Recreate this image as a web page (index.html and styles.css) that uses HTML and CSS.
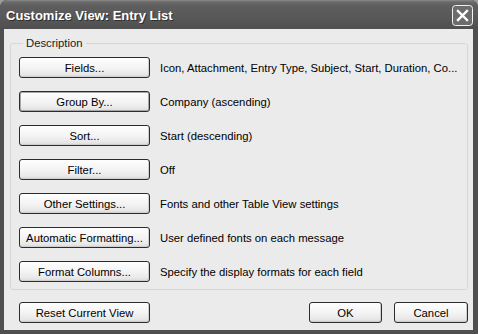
FILE: index.html
```html
<!DOCTYPE html>
<html>
<head>
<meta charset="utf-8">
<link rel="stylesheet" href="styles.css">
</head>
<body>
<div class="window">
  <div class="titlebar">
    <span class="title">Customize View: Entry List</span>
    <span class="close">
      <svg width="21" height="21" viewBox="0 0 21 21">
        <rect x="0.5" y="0.5" width="20" height="20" rx="3" ry="3" fill="#6c6c6c" stroke="#f2f2f2" stroke-width="1"/>
        <path d="M6 6 L15 15 M15 6 L6 15" stroke="#ffffff" stroke-width="2.4" stroke-linecap="square"/>
      </svg>
    </span>
  </div>
  <div class="client">
    <fieldset class="group">
      <legend>Description</legend>
      <div class="row"><button class="btn">Fields...</button><span class="desc">Icon, Attachment, Entry Type, Subject, Start, Duration, Co...</span></div>
      <div class="row"><button class="btn focus">Group By...</button><span class="desc">Company (ascending)</span></div>
      <div class="row"><button class="btn">Sort...</button><span class="desc">Start (descending)</span></div>
      <div class="row"><button class="btn">Filter...</button><span class="desc">Off</span></div>
      <div class="row"><button class="btn">Other Settings...</button><span class="desc">Fonts and other Table View settings</span></div>
      <div class="row"><button class="btn">Automatic Formatting...</button><span class="desc">User defined fonts on each message</span></div>
      <div class="row"><button class="btn">Format Columns...</button><span class="desc">Specify the display formats for each field</span></div>
    </fieldset>
    <div class="footer">
      <button class="btn">Reset Current View</button>
      <div class="spacer"></div>
      <button class="btn ok">OK</button>
      <button class="btn cancel">Cancel</button>
    </div>
  </div>
</div>
</body>
</html>
```

FILE: styles.css
```css
html, body {
  margin: 0;
  padding: 0;
  background: #9c9c9c;
}
.window {
  width: 478px;
  height: 334px;
  box-sizing: border-box;
  background: #4f4f4f;
  border-radius: 7px 7px 0 0;
  display: flex;
  flex-direction: column;
  overflow: hidden;
}
.titlebar {
  height: 29px;
  flex: none;
  box-sizing: border-box;
  display: flex;
  align-items: center;
  justify-content: space-between;
  padding: 1px 5px 0 6px;
  background: linear-gradient(#8a8a8a 0, #6a6a6a 2px, #5e5e5e 6px, #585858 60%, #4f4f4f 100%);
  border-radius: 7px 7px 0 0;
}
.title {
  font-family: "Liberation Sans", Arial, sans-serif;
  font-weight: bold;
  font-size: 13px;
  color: #ffffff;
  text-shadow: 1px 1px 0 #2e2e2e;
}
.close {
  display: flex;
  width: 21px;
  height: 21px;
}
.client {
  flex: 1;
  margin: 0 5px 4px 4px;
  background: #ebebeb;
  padding: 8px 5px 0 6px;
  font-family: "Liberation Sans", Arial, sans-serif;
  font-size: 11.3px;
  color: #000;
}
.group {
  margin: 0;
  padding: 7px 8px 7px 8px;
  border: 1px solid #d6d6d6;
  border-radius: 3px;
  display: flex;
  flex-direction: column;
  gap: 13px;
}
.group legend {
  padding: 0 3px;
  margin-left: 4px;
  line-height: 13px;
  color: #1a1a1a;
}
.row {
  display: flex;
  align-items: center;
  height: 21px;
}
.btn {
  font-family: "Liberation Sans", Arial, sans-serif;
  font-size: 11.3px;
  color: #000;
  height: 21px;
  width: 131px;
  padding: 0;
  box-sizing: border-box;
  border: 1px solid #2c2c2c;
  border-radius: 3px;
  background: linear-gradient(#fefefe, #f4f4f4 50%, #e8e8e8 85%, #d8d8d8);
  box-shadow: inset -1px -1px 0 #cfcfcf;
  flex: none;
}
.btn.focus {
  box-shadow: inset 0 0 0 1px #a8a8a8;
}
.desc {
  margin-left: 10px;
  white-space: nowrap;
}
.footer {
  display: flex;
  margin-top: 12px;
  padding-left: 9px;
}
.spacer {
  flex: 1;
}
.btn.ok {
  width: 73px;
}
.btn.cancel {
  width: 74px;
  margin-left: 12px;
}
```
